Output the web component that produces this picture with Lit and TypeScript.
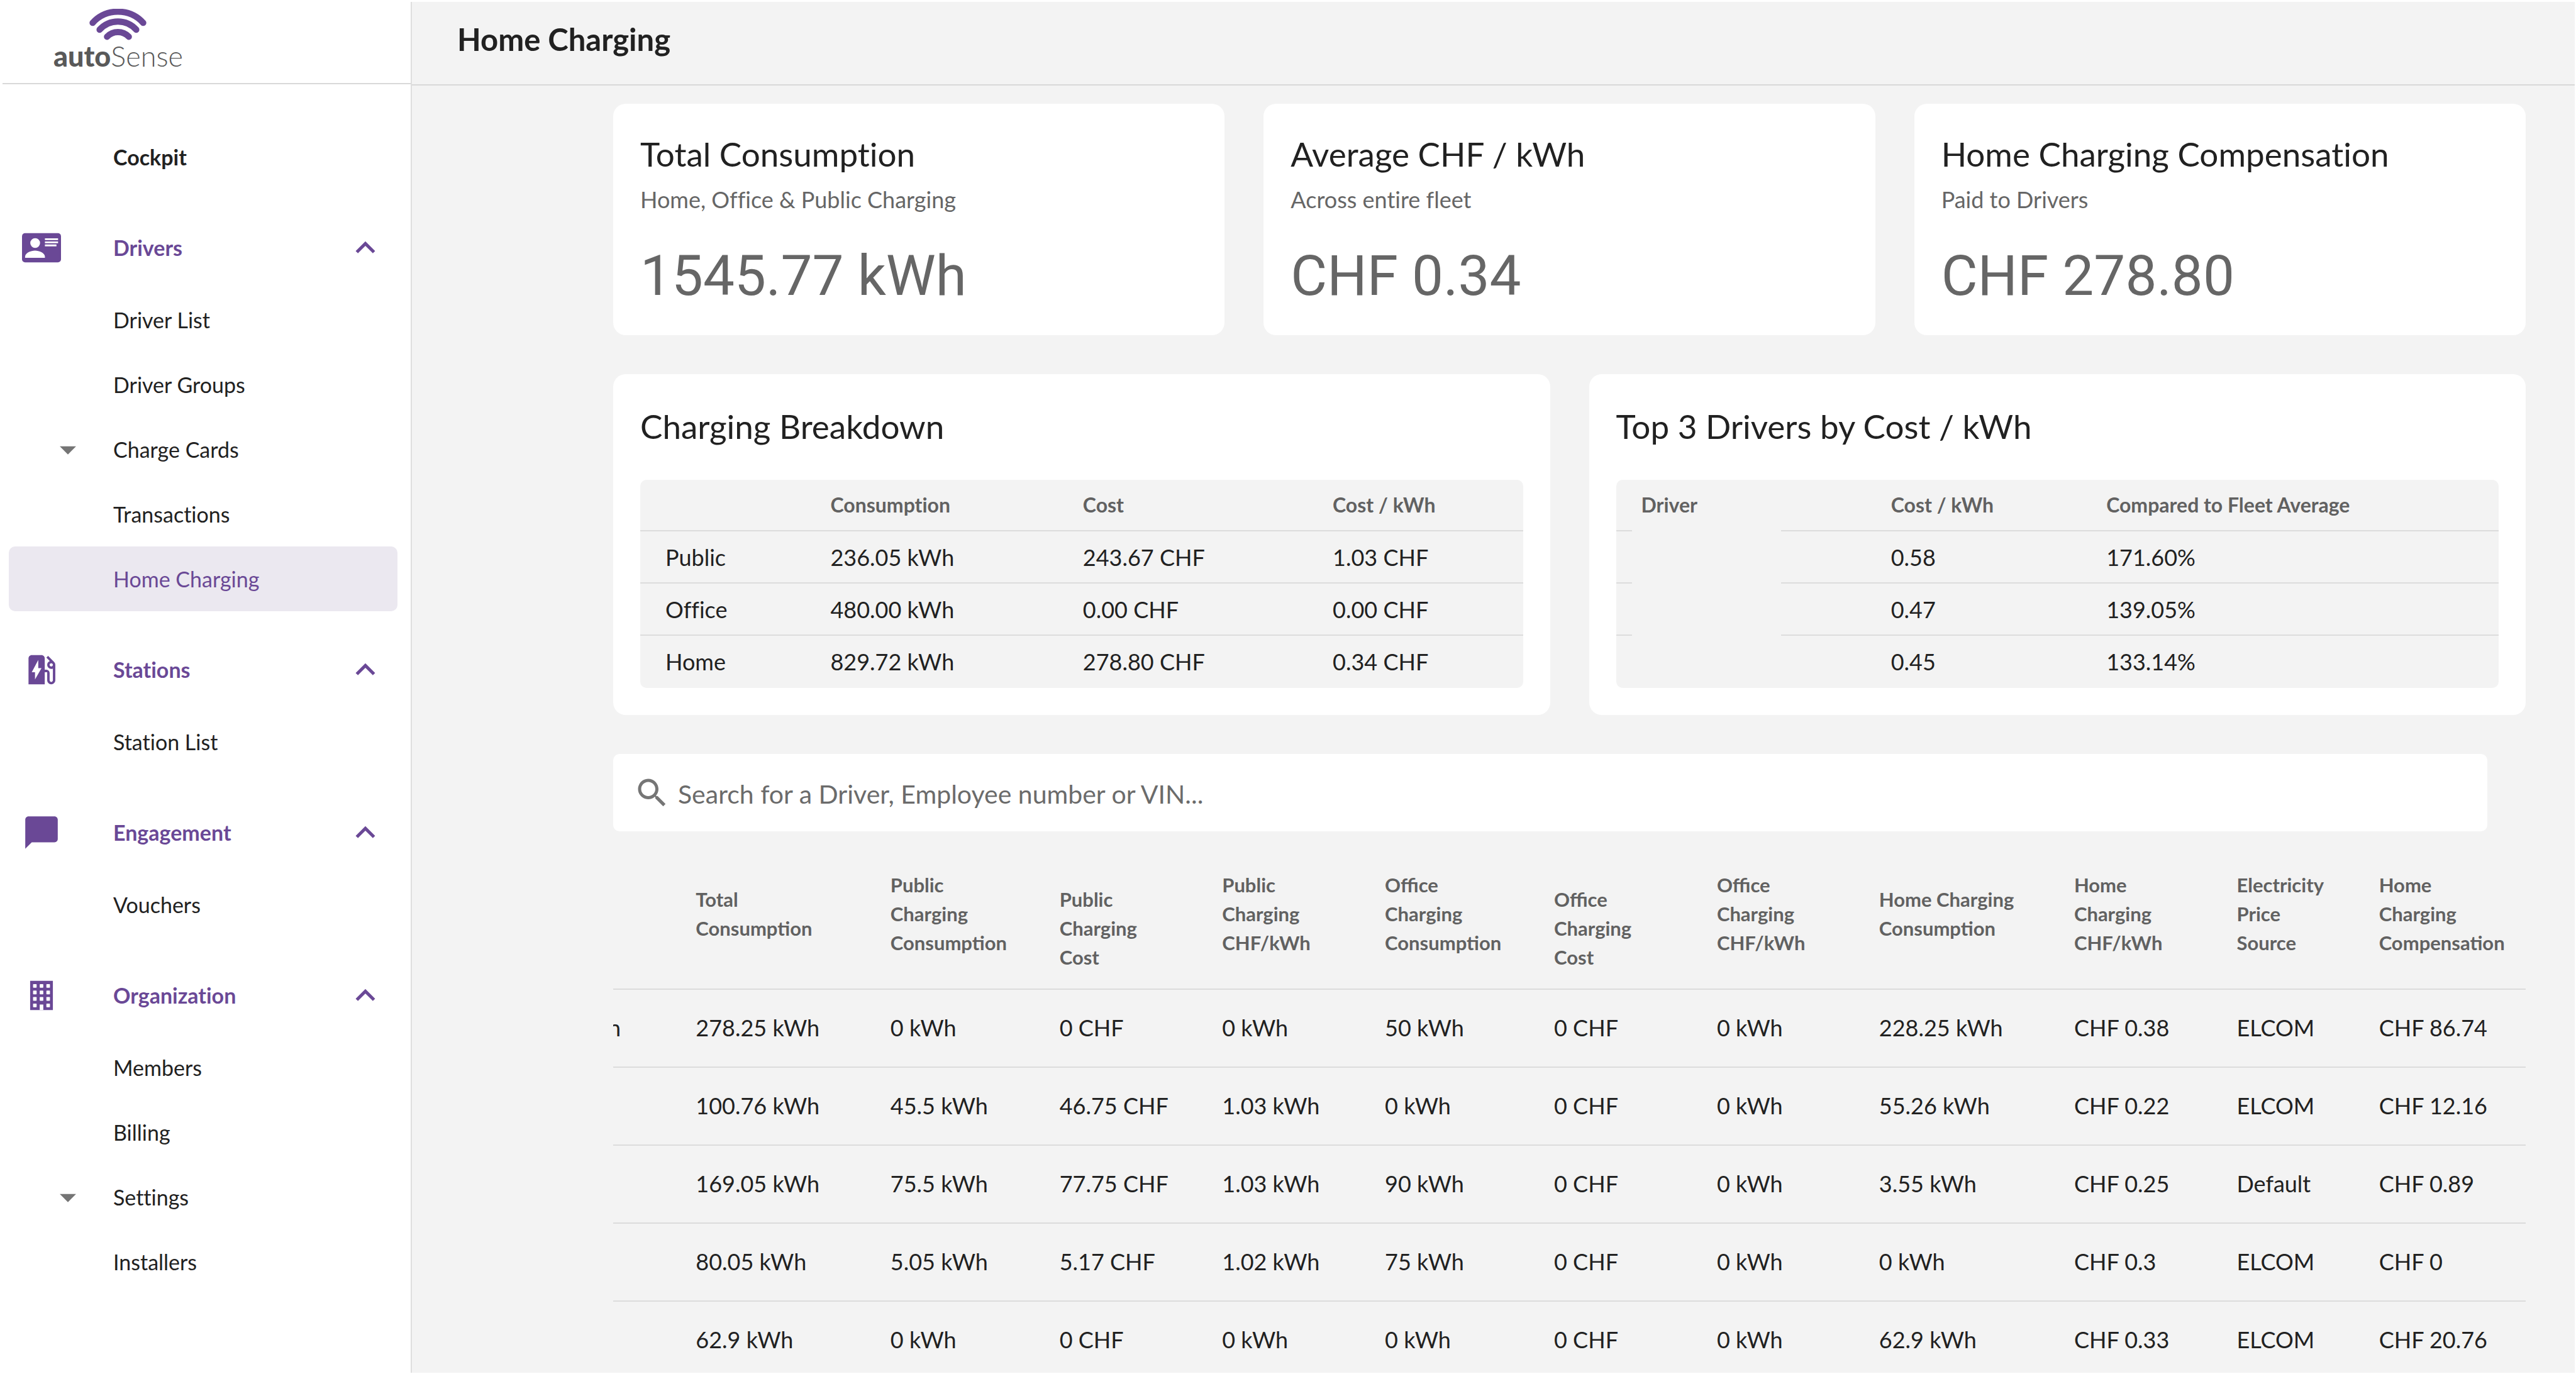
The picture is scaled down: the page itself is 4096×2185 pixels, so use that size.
import { LitElement, html, svg, css, nothing } from "lit";
import { customElement, property, state } from "lit/decorators.js";
import { classMap } from "lit/directives/class-map.js";

type NavItem = { label: string; expandable?: boolean };
type NavGroup = { label: string; icon: string; items: NavItem[] };

const NAV: NavGroup[] = [
  {
    label: "Drivers",
    icon: "card",
    items: [
      { label: "Driver List" },
      { label: "Driver Groups" },
      { label: "Charge Cards", expandable: true },
      { label: "Transactions" },
      { label: "Home Charging" },
    ],
  },
  { label: "Stations", icon: "station", items: [{ label: "Station List" }] },
  { label: "Engagement", icon: "chat", items: [{ label: "Vouchers" }] },
  {
    label: "Organization",
    icon: "building",
    items: [
      { label: "Members" },
      { label: "Billing" },
      { label: "Settings", expandable: true },
      { label: "Installers" },
    ],
  },
];

const WINDOWS_X = [6.8, 10.9, 15];
const WINDOWS_Y = [5, 9, 13, 17];

const ICONS: Record<string, unknown> = {
  card: svg`
    <rect x="0" y="3" width="24" height="18" rx="1.9" fill="currentColor" />
    <circle cx="8.1" cy="9.1" r="3" fill="#fff" />
    <path d="M1.9 18.2v-.7c0-2.4 3.6-3.8 6.1-3.8s6.1 1.4 6.1 3.8v.7z" fill="#fff" />
    <path d="M14.1 6.2h8.1v1.1h-8.1zM14.1 8.1h8.1v1.1h-8.1zM14.1 10h7.1v1.1h-7.1z" fill="#fff" />`,
  station: svg`<path fill="currentColor" d="m19.77 7.23.01-.01-3.72-3.72L15 4.56l2.11 2.11c-.94.36-1.61 1.26-1.61 2.33 0 1.38 1.12 2.5 2.5 2.5.36 0 .69-.08 1-.21v7.21c0 .55-.45 1-1 1s-1-.45-1-1V14c0-1.1-.9-2-2-2h-1V5c0-1.1-.9-2-2-2H6c-1.1 0-2 .9-2 2v16h10v-7.5h1.5v5c0 1.38 1.12 2.5 2.5 2.5s2.5-1.12 2.5-2.5V9c0-.69-.28-1.32-.73-1.77zM18 10c-.55 0-1-.45-1-1s.45-1 1-1 1 .45 1 1-.45 1-1 1zM8 18v-4.5H6L10 6v5h2z" />`,
  chat: svg`<path fill="currentColor" d="M20 2H4c-1.1 0-1.99.9-1.99 2L2 22l4-4h14c1.1 0 2-.9 2-2V4c0-1.1-.9-2-2-2z" />`,
  building: svg`
    <rect x="5" y="3" width="14" height="18" fill="currentColor" />
    ${WINDOWS_Y.map((y) =>
      WINDOWS_X.map((x) =>
        x === 10.9 && y === 17
          ? svg`<rect x=${x} y="17.6" width="2.2" height="3.4" fill="#fff" />`
          : svg`<rect x=${x} y=${y} width="2.2" height="2.3" rx=".3" fill="#fff" />`
      )
    )}`,
  up: svg`<path fill="currentColor" d="M12 8l-6 6 1.41 1.41L12 10.83l4.59 4.58L18 14z" />`,
  drop: svg`<path fill="currentColor" d="M7 10l5 5 5-5z" />`,
  search: svg`<path fill="currentColor" d="M15.5 14h-.79l-.28-.27C15.41 12.59 16 11.11 16 9.5 16 5.91 13.09 3 9.5 3S3 5.91 3 9.5 5.91 16 9.5 16c1.61 0 3.09-.59 4.23-1.57l.27.28v.79l5 4.99L20.49 19l-4.99-5zm-6 0C7.01 14 5 11.99 5 9.5S7.01 5 9.5 5 14 7.01 14 9.5 11.99 14 9.5 14z" />`,
};

const icon = (name: string) =>
  html`<svg class="icon" viewBox="0 0 24 24" aria-hidden="true">${ICONS[name]}</svg>`;

@customElement("side-nav")
class SideNav extends LitElement {
  @property() active = "";

  static styles = css`
    :host {
      display: block;
      background: #fff;
      color: #212121;
    }
    .logo {
      box-sizing: border-box;
      height: 134px;
      margin-left: 4px;
      padding: 14px 0 0 81px;
      border-bottom: 2px solid #d8d8d8;
    }
    .brand {
      display: inline-flex;
      flex-direction: column;
      align-items: center;
      color: #595959;
      text-decoration: none;
      font-size: 45px;
      line-height: 50px;
    }
    .waves {
      display: block;
      width: 91px;
      height: 50px;
    }
    .brand b {
      font-weight: 900;
    }
    .thin {
      font-weight: 300;
    }
    nav {
      padding: 64px 21px 0 14px;
    }
    ul {
      margin: 0;
      padding: 0;
      list-style: none;
    }
    .group {
      margin-top: 41px;
    }
    .items {
      margin-top: 12px;
    }
    .item {
      box-sizing: border-box;
      display: grid;
      grid-template-columns: 145px 1fr auto;
      align-items: center;
      width: 100%;
      height: 103px;
      margin: 0;
      padding: 0 20px 0 21px;
      border: 0;
      border-radius: 10px;
      background: none;
      color: inherit;
      font: inherit;
      font-size: 34px;
      line-height: 40px;
      font-variant-ligatures: none;
      text-align: left;
      text-decoration: none;
    }
    .strong {
      font-weight: 700;
    }
    .heading {
      color: #6a4896;
    }
    .active {
      background: #ebe8f0;
      color: #6a4896;
    }
    .slot {
      display: flex;
    }
    .nested {
      padding-left: 42px;
      color: #757575;
    }
    .icon {
      display: block;
      width: 62px;
      height: 62px;
    }
  `;

  render() {
    return html`
      <div class="logo">
        <a class="brand" href="#">
          <svg class="waves" viewBox="142 14 91 50" fill="none" stroke="#6a4896" stroke-width="10" stroke-linecap="round" aria-hidden="true">
            <path d="M147.3 36.3A54.5 54.5 0 0 1 227.7 36.3" />
            <path d="M158.4 47.2A39 39 0 0 1 216.6 47.2" />
            <path d="M170.2 58.4A24 24 0 0 1 204.8 58.4" />
          </svg>
          <span><b>auto</b><span class="thin">Sense</span></span>
        </a>
      </div>
      <nav aria-label="Main">
        <a class="item strong" href="#"><span></span><span>Cockpit</span></a>
        ${NAV.map(
          (group) => html`
            <div class="group">
              <button class="item strong heading" type="button" aria-expanded="true">
                <span class="slot">${icon(group.icon)}</span>
                <span>${group.label}</span>
                ${icon("up")}
              </button>
              <ul class="items">
                ${group.items.map(
                  (item) => html`<li>
                    <a class=${classMap({ item: true, active: item.label === this.active })} href="#">
                      <span class="slot nested">${item.expandable ? icon("drop") : nothing}</span>
                      <span>${item.label}</span>
                    </a>
                  </li>`
                )}
              </ul>
            </div>
          `
        )}
      </nav>
    `;
  }
}

const STATS = [
  { title: "Total Consumption", note: "Home, Office & Public Charging", value: "1545.77 kWh" },
  { title: "Average CHF / kWh", note: "Across entire fleet", value: "CHF 0.34" },
  { title: "Home Charging Compensation", note: "Paid to Drivers", value: "CHF 278.80" },
];

const BREAKDOWN = [
  ["Public", "236.05 kWh", "243.67 CHF", "1.03 CHF"],
  ["Office", "480.00 kWh", "0.00 CHF", "0.00 CHF"],
  ["Home", "829.72 kWh", "278.80 CHF", "0.34 CHF"],
];

const TOP_DRIVERS = [
  ["", "0.58", "171.60%"],
  ["", "0.47", "139.05%"],
  ["", "0.45", "133.14%"],
];

const COLUMNS: { lines: string[]; width: number }[] = [
  { lines: [], width: 4.57 },
  { lines: ["Total", "Consumption"], width: 10.15 },
  { lines: ["Public", "Charging", "Consumption"], width: 8.82 },
  { lines: ["", "Public", "Charging", "Cost"], width: 8.48 },
  { lines: ["Public", "Charging", "CHF/kWh"], width: 8.49 },
  { lines: ["Office", "Charging", "Consumption"], width: 8.82 },
  { lines: ["", "Office", "Charging", "Cost"], width: 8.49 },
  { lines: ["Office", "Charging", "CHF/kWh"], width: 8.46 },
  { lines: ["Home Charging", "Consumption"], width: 10.17 },
  { lines: ["Home", "Charging", "CHF/kWh"], width: 8.48 },
  { lines: ["Electricity", "Price", "Source"], width: 7.42 },
  { lines: ["Home", "Charging", "Compensation"], width: 7.65 },
];

const ROWS = [
  ["n", "278.25 kWh", "0 kWh", "0 CHF", "0 kWh", "50 kWh", "0 CHF", "0 kWh", "228.25 kWh", "CHF 0.38", "ELCOM", "CHF 86.74"],
  ["", "100.76 kWh", "45.5 kWh", "46.75 CHF", "1.03 kWh", "0 kWh", "0 CHF", "0 kWh", "55.26 kWh", "CHF 0.22", "ELCOM", "CHF 12.16"],
  ["", "169.05 kWh", "75.5 kWh", "77.75 CHF", "1.03 kWh", "90 kWh", "0 CHF", "0 kWh", "3.55 kWh", "CHF 0.25", "Default", "CHF 0.89"],
  ["", "80.05 kWh", "5.05 kWh", "5.17 CHF", "1.02 kWh", "75 kWh", "0 CHF", "0 kWh", "0 kWh", "CHF 0.3", "ELCOM", "CHF 0"],
  ["", "62.9 kWh", "0 kWh", "0 CHF", "0 kWh", "0 kWh", "0 CHF", "0 kWh", "62.9 kWh", "CHF 0.33", "ELCOM", "CHF 20.76"],
];

@customElement("app-root")
class AppRoot extends LitElement {
  @state() private query = "";

  static styles = css`
    :host {
      box-sizing: border-box;
      display: grid;
      grid-template-columns: 653px minmax(0, 1fr);
      height: 100vh;
      overflow: hidden;
      background: #fff;
      color: #212121;
      font-family: Lato, "Liberation Sans", sans-serif;
    }
    h1,
    h2,
    p {
      margin: 0;
    }
    main {
      overflow: hidden;
      margin: 3px 2px 2px 0;
      border-left: 2px solid #dedede;
      background: #f3f3f3;
    }
    .top {
      padding: 30px 72px 43px;
      border-bottom: 2px solid #d8d8d8;
    }
    h1 {
      font-size: 49px;
      line-height: 58px;
      font-weight: 700;
    }
    .content {
      display: grid;
      gap: 62px;
      padding: 29px 78px 0 320px;
    }
    .stats,
    .panels {
      display: grid;
      gap: 62px;
      grid-template-columns: repeat(3, minmax(0, 1fr));
    }
    .panels {
      grid-template-columns: repeat(2, minmax(0, 1fr));
    }
    .card {
      padding: 42px 43px;
      border-radius: 20px;
      background: #fff;
      font-variant-ligatures: none;
    }
    h2 {
      font-size: 53px;
      line-height: 76px;
      font-weight: 400;
    }
    .note {
      margin-top: 10px;
      color: #666;
      font-size: 36px;
      line-height: 48px;
    }
    .value {
      margin-top: 46px;
      color: #666;
      font-family: Roboto, "Liberation Sans", sans-serif;
      font-size: 89px;
      line-height: 104px;
    }
    .panels .card {
      padding-bottom: 43px;
    }
    .panels h2 {
      line-height: 82px;
      margin-bottom: 44px;
    }
    table {
      width: 100%;
      border-collapse: separate;
      border-spacing: 0;
      table-layout: fixed;
      font-size: 36px;
      line-height: 44px;
      text-align: left;
    }
    th {
      color: #616161;
      font-size: 32px;
      font-weight: 700;
    }
    th,
    td {
      box-sizing: border-box;
      padding: 0;
      border-bottom: 2px solid #dcdcdc;
      white-space: nowrap;
    }
    .inset {
      position: relative;
      overflow: hidden;
      border-radius: 10px;
      background: #f3f3f3;
    }
    .inset th,
    .inset td {
      height: 83px;
      padding-left: 40px;
    }
    .inset th {
      height: 82px;
    }
    .inset tr:last-child td {
      border-bottom-color: transparent;
    }
    .a1 { width: 18.7%; }
    .a2 { width: 28.6%; }
    .a3 { width: 28.3%; }
    .b1 { width: 28.3%; }
    .b2 { width: 24.4%; }
    /* Cover over the driver names */
    .cover {
      position: absolute;
      top: 76px;
      bottom: 0;
      left: 25px;
      width: 237px;
      background: #f3f3f3;
    }
    .search {
      display: flex;
      align-items: center;
      gap: 11px;
      height: 123px;
      margin-right: 61px;
      padding: 0 32px;
      box-sizing: border-box;
      border-radius: 10px;
      background: #fff;
      color: #757575;
    }
    .icon {
      flex: none;
      width: 60px;
      height: 60px;
    }
    .search input {
      flex: 1;
      min-width: 0;
      padding: 4px 0 0;
      border: 0;
      outline: 0;
      background: none;
      color: #212121;
      font: inherit;
      font-size: 41px;
      line-height: 52px;
    }
    .search input::placeholder {
      color: #6b6b6b;
      opacity: 1;
    }
    /* The report is wider than its frame and stands scrolled to its right end */
    .report {
      display: flex;
      justify-content: flex-end;
      overflow: hidden;
      margin-top: -50px;
    }
    .report table {
      flex: none;
      width: calc(100% + 8px);
    }
    .report th {
      height: 240px;
      font-size: 31px;
      line-height: 46px;
    }
    .report td {
      height: 124px;
      padding-bottom: 2px;
    }
    .line {
      display: block;
      min-height: 46px;
    }
  `;

  private search(event: Event) {
    this.query = (event.target as HTMLInputElement).value;
  }

  render() {
    return html`
      <side-nav active="Home Charging"></side-nav>
      <main>
        <header class="top"><h1>Home Charging</h1></header>
        <div class="content">
          <section class="stats">
            ${STATS.map(
              (stat) => html`<article class="card">
                <h2>${stat.title}</h2>
                <p class="note">${stat.note}</p>
                <p class="value">${stat.value}</p>
              </article>`
            )}
          </section>

          <section class="panels">
            <article class="card">
              <h2>Charging Breakdown</h2>
              <div class="inset">
                <table>
                  <thead>
                    <tr>
                      <th class="a1"></th>
                      <th class="a2" scope="col">Consumption</th>
                      <th class="a3" scope="col">Cost</th>
                      <th scope="col">Cost / kWh</th>
                    </tr>
                  </thead>
                  <tbody>
                    ${BREAKDOWN.map((row) => html`<tr>${row.map((cell) => html`<td>${cell}</td>`)}</tr>`)}
                  </tbody>
                </table>
              </div>
            </article>
            <article class="card">
              <h2>Top 3 Drivers by Cost / kWh</h2>
              <div class="inset">
                <table>
                  <thead>
                    <tr>
                      <th class="b1" scope="col">Driver</th>
                      <th class="b2" scope="col">Cost / kWh</th>
                      <th scope="col">Compared to Fleet Average</th>
                    </tr>
                  </thead>
                  <tbody>
                    ${TOP_DRIVERS.map((row) => html`<tr>${row.map((cell) => html`<td>${cell}</td>`)}</tr>`)}
                  </tbody>
                </table>
                <div class="cover"></div>
              </div>
            </article>
          </section>

          <label class="search">
            ${icon("search")}
            <input
              type="text"
              placeholder="Search for a Driver, Employee number or VIN..."
              .value=${this.query}
              @input=${this.search}
            />
          </label>

          <div class="report">
            <table>
              <colgroup>
                ${COLUMNS.map((column) => html`<col style="width:${column.width}%" />`)}
              </colgroup>
              <thead>
                <tr>
                  ${COLUMNS.map(
                    (column) => html`<th scope="col">${column.lines.map((line) => html`<span class="line">${line}</span>`)}</th>`
                  )}
                </tr>
              </thead>
              <tbody>
                ${ROWS.map((row) => html`<tr>${row.map((cell) => html`<td>${cell}</td>`)}</tr>`)}
              </tbody>
            </table>
          </div>
        </div>
      </main>
    `;
  }
}
